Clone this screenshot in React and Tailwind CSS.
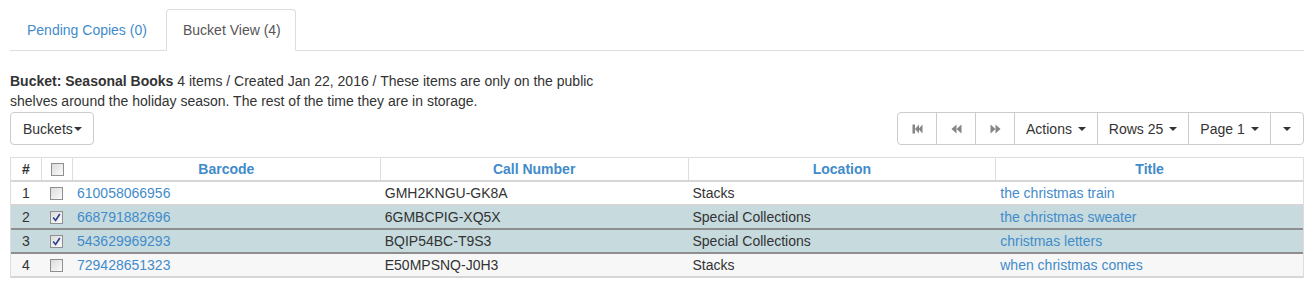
import React from "react";

const Caret = ({ className = "" }) => (
  <span
    className={
      "inline-block w-0 h-0 align-middle border-t-[4px] border-t-[#333] border-x-[4px] border-x-transparent " +
      className
    }
  />
);

const Check = ({ checked }) => (
  <span className="inline-flex items-center justify-center w-[13px] h-[13px] border border-[#8f8f8f] bg-gradient-to-br from-[#dcdcdc] to-[#fbfbfb]">
    {checked && (
      <svg width="9" height="9" viewBox="0 0 9 9">
        <path d="M1.2 4.6 L3.6 7.4 L7.8 1" fill="none" stroke="#2c3b92" strokeWidth="1.6" />
      </svg>
    )}
  </span>
);

const ICON = "#858585";
const StepBack = () => (
  <svg width="11" height="10" viewBox="0 0 11 10">
    <rect x="0.5" y="0.5" width="2.5" height="9" fill={ICON} />
    <path d="M3 5 L7 0.5 L7 9.5 Z" fill={ICON} />
    <path d="M6.5 5 L10.5 0.5 L10.5 9.5 Z" fill={ICON} />
  </svg>
);
const Back = () => (
  <svg width="11" height="10" viewBox="0 0 11 10">
    <path d="M0.5 5 L5.5 0.5 L5.5 9.5 Z" fill={ICON} />
    <path d="M5.5 5 L10.5 0.5 L10.5 9.5 Z" fill={ICON} />
  </svg>
);
const Fwd = () => (
  <svg width="11" height="10" viewBox="0 0 11 10">
    <path d="M10.5 5 L5.5 0.5 L5.5 9.5 Z" fill={ICON} />
    <path d="M5.5 5 L0.5 0.5 L0.5 9.5 Z" fill={ICON} />
  </svg>
);

const rows = [
  { n: 1, checked: false, barcode: "610058066956", call: "GMH2KNGU-GK8A", loc: "Stacks", title: "the christmas train", bg: "bg-white", bb: "border-[#d6d6d6]" },
  { n: 2, checked: true, barcode: "668791882696", call: "6GMBCPIG-XQ5X", loc: "Special Collections", title: "the christmas sweater", bg: "bg-[#c7dbdf]", bb: "border-[#8e8e8e]" },
  { n: 3, checked: true, barcode: "543629969293", call: "BQIP54BC-T9S3", loc: "Special Collections", title: "christmas letters", bg: "bg-[#c7dbdf]", bb: "border-[#8e8e8e]" },
  { n: 4, checked: false, barcode: "729428651323", call: "E50MPSNQ-J0H3", loc: "Stacks", title: "when christmas comes", bg: "bg-[#f7f7f7]", bb: "border-[#d6d6d6]" },
];

const grid = "grid grid-cols-[30px_31px_1fr_1fr_1fr_1fr]";

export default function App() {
  return (
    <div className="w-[1314px] h-[294px] bg-white px-[10px] pt-[9px] font-['Liberation_Sans',Arial,sans-serif] text-[14px] leading-[20px] text-[#333]">
      {/* Tabs */}
      <div className="flex border-b border-[#ddd] h-[42px]">
        <div className="mr-[2px] w-[154px] pl-[17px] pt-[11px] h-[41px] text-[#428bca]">Pending Copies (0)</div>
        <div className="w-[130px] pl-[16px] pt-[10px] h-[42px] border border-[#ddd] border-b-white rounded-t-[4px] text-[#555] bg-white">
          Bucket View (4)
        </div>
      </div>

      {/* Description */}
      <div className="mt-[20px] w-[630px]">
        <b>Bucket: Seasonal Books</b> 4 items / Created Jan 22, 2016 / These items are only on the public shelves
        around the holiday season. The rest of the time they are in storage.
      </div>

      {/* Toolbar */}
      <div className="mt-px flex justify-between items-start">
        <button className="h-[33px] w-[84px] pl-[12px] border border-[#ccc] rounded-[4px] bg-white text-[#333] flex items-center">
          Buckets<Caret className="ml-[1px]" />
        </button>
        <div className="flex h-[33px]">
          <button className="w-[40px] flex items-center justify-center border border-[#ccc] rounded-l-[4px] bg-white">
            <StepBack />
          </button>
          <button className="w-[40px] -ml-px flex items-center justify-center border border-[#ccc] bg-white">
            <Back />
          </button>
          <button className="w-[40px] -ml-px flex items-center justify-center border border-[#ccc] bg-white">
            <Fwd />
          </button>
          <button className="w-[84px] -ml-px flex items-center justify-center border border-[#ccc] bg-white">
            Actions<Caret className="ml-[6px]" />
          </button>
          <button className="w-[92px] -ml-px flex items-center justify-center border border-[#ccc] bg-white">
            Rows 25<Caret className="ml-[6px]" />
          </button>
          <button className="w-[83px] -ml-px flex items-center justify-center border border-[#ccc] bg-white">
            Page 1<Caret className="ml-[6px]" />
          </button>
          <button className="w-[34px] -ml-px flex items-center justify-center border border-[#ccc] rounded-r-[4px] bg-white">
            <Caret />
          </button>
        </div>
      </div>

      {/* Table */}
      <div className="mt-[12px] border-x border-t border-[#ddd]">
        <div className={grid + " h-[24px] border-b-2 border-[#d6d6d6] font-bold"}>
          <div className="flex items-center justify-center">#</div>
          <div className="flex items-center justify-center border-l border-[#ddd]">
            <Check />
          </div>
          <div className="flex items-center justify-center border-l border-[#ddd] text-[#428bca]">Barcode</div>
          <div className="flex items-center justify-center border-l border-[#ddd] text-[#428bca]">Call Number</div>
          <div className="flex items-center justify-center border-l border-[#ddd] text-[#428bca]">Location</div>
          <div className="flex items-center justify-center border-l border-[#ddd] text-[#428bca]">Title</div>
        </div>
        {rows.map((r) => (
          <div key={r.n} className={grid + " h-[24px] border-b-2 " + r.bg + " " + r.bb}>
            <div className="flex items-center justify-center">{r.n}</div>
            <div className="flex items-center justify-center">
              <Check checked={r.checked} />
            </div>
            <div className="flex items-center px-[5px] text-[#428bca]">{r.barcode}</div>
            <div className="flex items-center px-[5px]">{r.call}</div>
            <div className="flex items-center px-[5px]">{r.loc}</div>
            <div className="flex items-center px-[5px] text-[#428bca]">{r.title}</div>
          </div>
        ))}
      </div>
    </div>
  );
}
